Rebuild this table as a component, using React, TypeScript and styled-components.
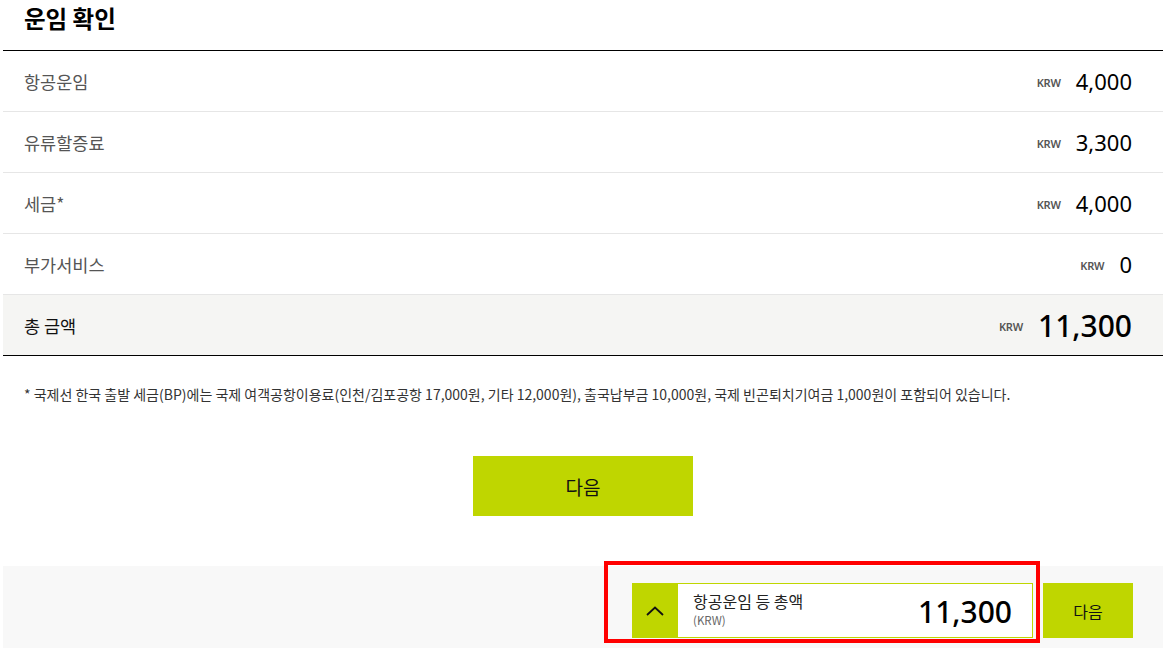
import styled, { createGlobalStyle } from 'styled-components'

const lime = '#bfd600'

const GlobalStyle = createGlobalStyle`
  body {
    margin: 0;
    background: #fff;
    font-family: "Noto Sans", "Noto Sans CJK KR", sans-serif;
    color: #111;
  }
`

const Page = styled.div`
  padding-left: 3px;
  position: relative;
  min-height: 648px;
  display: flex;
  flex-direction: column;
`

const TitleBar = styled.div`
  height: 51px;
  box-sizing: border-box;
  padding: 2px 0 0 21px;
  border-bottom: 1px solid #000;
`

const Title = styled.h2`
  margin: 0;
  font-family: "Noto Sans CJK KR", sans-serif;
  font-size: 23.5px;
  line-height: 32px;
  font-weight: 700;
  color: #000;
`

const Row = styled.div<{ $total?: boolean }>`
  display: flex;
  align-items: center;
  justify-content: space-between;
  height: 61px;
  box-sizing: border-box;
  padding: 0 31px 0 21px;
  border-bottom: 1px solid ${(p) => (p.$total ? '#000' : '#e6e6e6')};
  background: ${(p) => (p.$total ? '#f5f5f3' : '#fff')};
`

const Label = styled.span<{ $total?: boolean }>`
  font-family: "Noto Sans CJK KR", sans-serif;
  font-size: 17.5px;
  color: ${(p) => (p.$total ? '#111' : '#555')};
`

const Amount = styled.div`
  display: flex;
  align-items: center;
  gap: 15px;
`

const Currency = styled.span`
  font-size: 11px;
  font-weight: 600;
  color: #555;
  letter-spacing: -0.2px;
  padding-top: 3px;
`

const Value = styled.span<{ $big?: boolean }>`
  font-size: ${(p) => (p.$big ? '30px' : '22px')};
  color: #000;
  font-weight: ${(p) => (p.$big ? 500 : 400)};
`

const Note = styled.p`
  margin: 28px 0 0 21px;
  font-family: "Noto Sans CJK KR", sans-serif;
  font-size: 14px;
  line-height: 20px;
  color: #333;
`

const ButtonRow = styled.div`
  display: flex;
  justify-content: center;
  margin-top: 52px;
`

const NextButton = styled.button<{ $small?: boolean }>`
  border: 0;
  background: ${lime};
  font-family: "Noto Sans CJK KR", sans-serif;
  color: #111;
  width: ${(p) => (p.$small ? '90px' : '220px')};
  height: ${(p) => (p.$small ? '55px' : '60px')};
  font-size: ${(p) => (p.$small ? '16px' : '19px')};
  cursor: pointer;
`

const BottomBar = styled.div`
  margin-top: 50px;
  flex: 1;
  background: #f8f8f8;
  padding: 17px 30px 0 0;
  display: flex;
  justify-content: flex-end;
  align-items: flex-start;
  gap: 10px;
`

const Summary = styled.div`
  display: flex;
  height: 55px;
`

const Toggle = styled.button`
  width: 46px;
  border: 0;
  background: ${lime};
  display: flex;
  align-items: center;
  justify-content: center;
  padding: 0;
`

const SummaryBox = styled.div`
  width: 355px;
  box-sizing: border-box;
  border: 1px solid ${lime};
  border-left: 0;
  background: #fff;
  display: flex;
  align-items: center;
  justify-content: space-between;
  padding: 0 20px 0 15px;
`

const SummaryText = styled.div`
  display: flex;
  flex-direction: column;
  font-family: "Noto Sans CJK KR", sans-serif;
  padding-bottom: 3px;
`

const SummaryTitle = styled.span`
  font-size: 16px;
  line-height: 22px;
  color: #222;
`

const SummaryUnit = styled.span`
  font-size: 11.5px;
  line-height: 16px;
  color: #666;
`

const SummaryValue = styled.span`
  font-size: 30px;
  font-weight: 500;
  color: #000;
  padding-top: 2px;
`

const Highlight = styled.div`
  position: absolute;
  left: 604px;
  top: 561px;
  width: 436px;
  height: 82px;
  box-sizing: border-box;
  border: 4px solid #ff0000;
  pointer-events: none;
`

const rows = [
  { label: '항공운임', value: '4,000' },
  { label: '유류할증료', value: '3,300' },
  { label: '세금*', value: '4,000' },
  { label: '부가서비스', value: '0' },
]

export default function App() {
  return (
    <>
      <GlobalStyle />
      <Page>
        <TitleBar>
          <Title>운임 확인</Title>
        </TitleBar>
        {rows.map((r) => (
          <Row key={r.label}>
            <Label>{r.label}</Label>
            <Amount>
              <Currency>KRW</Currency>
              <Value>{r.value}</Value>
            </Amount>
          </Row>
        ))}
        <Row $total>
          <Label $total>총 금액</Label>
          <Amount>
            <Currency>KRW</Currency>
            <Value $big>11,300</Value>
          </Amount>
        </Row>
        <Note>
          * 국제선 한국 출발 세금(BP)에는 국제 여객공항이용료(인천/김포공항 17,000원, 기타 12,000원), 출국납부금 10,000원, 국제 빈곤퇴치기여금 1,000원이 포함되어 있습니다.
        </Note>
        <ButtonRow>
          <NextButton>다음</NextButton>
        </ButtonRow>
        <BottomBar>
          <Summary>
            <Toggle aria-label="펼치기">
              <svg width="18" height="10" viewBox="0 0 18 10">
                <polyline points="1,9 9,1.5 17,9" fill="none" stroke="#111" strokeWidth="1.8" />
              </svg>
            </Toggle>
            <SummaryBox>
              <SummaryText>
                <SummaryTitle>항공운임 등 총액</SummaryTitle>
                <SummaryUnit>(KRW)</SummaryUnit>
              </SummaryText>
              <SummaryValue>11,300</SummaryValue>
            </SummaryBox>
          </Summary>
          <NextButton $small>다음</NextButton>
        </BottomBar>
        <Highlight />
      </Page>
    </>
  )
}
